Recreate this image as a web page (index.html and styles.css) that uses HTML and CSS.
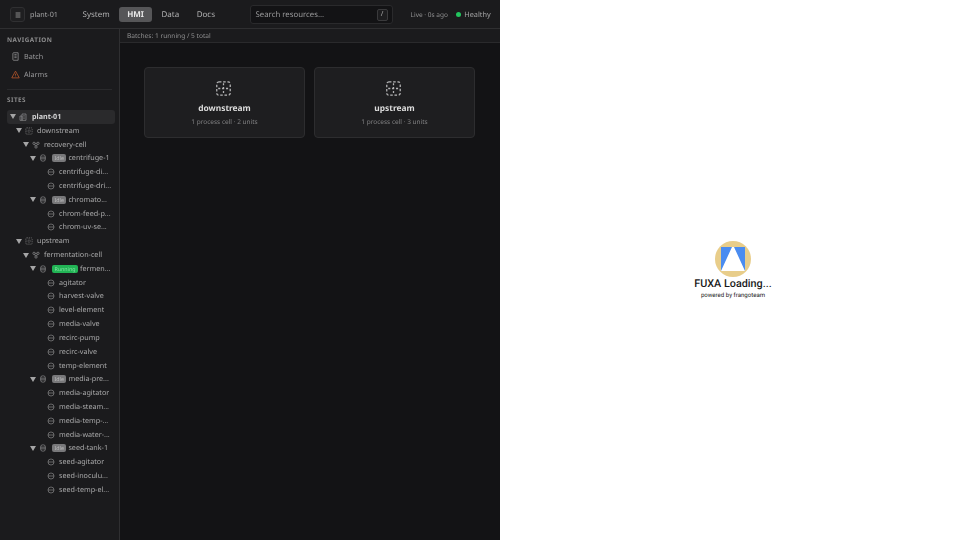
FILE: index.html
```html
<!DOCTYPE html>
<html lang="en">
<head>
<meta charset="utf-8">
<title>plant-01 HMI</title>
<link rel="stylesheet" href="styles.css">
</head>
<body>
<svg class="defs" width="0" height="0" aria-hidden="true">
  <defs>
    <symbol id="i-area" viewBox="0 0 24 24"><rect x="2.500" y="2.500" width="19" height="19" rx="3" fill="none" stroke="currentColor" stroke-width="1.800" stroke-dasharray="3.600 2.400"/><path d="M12 4.500v15M4.500 12h15" fill="none" stroke="currentColor" stroke-width="1.800" stroke-dasharray="3 2.500"/></symbol>
    <symbol id="i-unit" viewBox="0 0 24 24"><circle cx="12" cy="12" r="9" fill="none" stroke="currentColor" stroke-width="2"/><path d="M3 12h18" stroke="currentColor" stroke-width="2"/></symbol>
    <symbol id="i-tank" viewBox="0 0 24 24"><rect x="5" y="2.500" width="14" height="19" rx="6" fill="none" stroke="currentColor" stroke-width="2.200"/><path d="M5 9.500h14M5 14.500h14" stroke="currentColor" stroke-width="2.200"/></symbol>
    <symbol id="i-cell" viewBox="0 0 24 24"><circle cx="6" cy="7" r="3.500" fill="none" stroke="currentColor" stroke-width="2.200"/><circle cx="18" cy="7" r="3.500" fill="none" stroke="currentColor" stroke-width="2.200"/><circle cx="12" cy="18" r="3.500" fill="none" stroke="currentColor" stroke-width="2.200"/><path d="M9.500 7h5M8 10l2.500 5M16 10l-2.500 5" stroke="currentColor" stroke-width="2.200"/></symbol>
    <symbol id="i-site" viewBox="0 0 24 24"><path d="M3 22V9h6v13M9 22V3h12v19M3 22h18M13 8h4M13 12h4M13 16h4" fill="none" stroke="currentColor" stroke-width="2.200"/></symbol>
  </defs>
</svg>
<div class="app">
  <header class="topbar">
    <button class="menu-btn" type="button" aria-label="Menu">
      <svg class="menu-icon" viewBox="0 0 10 10"><path d="M2 2.500h6M2 5h6M2 7.500h6" stroke="currentColor" stroke-width="1"/></svg>
    </button>
    <span class="site-name">plant-01</span>
    <nav class="tabs">
      <a class="tab">System</a>
      <a class="tab tab-active">HMI</a>
      <a class="tab">Data</a>
      <a class="tab">Docs</a>
    </nav>
    <div class="search">
      <span class="search-text">Search resources...</span>
      <kbd class="search-key">/</kbd>
    </div>
    <span class="live">Live · 0s ago</span>
    <span class="dot"></span>
    <span class="health">Healthy</span>
  </header>
  <div class="body-row">
    <aside class="sidebar">
      <h2 class="side-title first">NAVIGATION</h2>
      <a class="nav-item">
        <svg class="nav-icon" viewBox="0 0 24 24"><path d="M5 4a2 2 0 0 1 2-2h12v20H7a2 2 0 0 1-2-2zM9 7h6M9 11h6M9 15h6" fill="none" stroke="currentColor" stroke-width="2"/></svg>
        Batch
      </a>
      <a class="nav-item">
        <svg class="nav-icon alarm" viewBox="0 0 24 24"><path d="M12 3 22 21H2zM12 10v5M12 17.500v1" fill="none" stroke="currentColor" stroke-width="2.200"/></svg>
        Alarms
      </a>
      <div class="side-rule"></div>
      <h2 class="side-title">SITES</h2>
      <div class="tree">
        <div class="row d0 row-current"><span class="caret"></span><svg class="ti"><use href="#i-site"/></svg><span class="label strong">plant-01</span></div>
        <div class="row d1"><span class="caret"></span><svg class="ti"><use href="#i-area"/></svg><span class="label">downstream</span></div>
        <div class="row d2"><span class="caret"></span><svg class="ti"><use href="#i-cell"/></svg><span class="label">recovery-cell</span></div>
        <div class="row d3"><span class="caret"></span><svg class="ti"><use href="#i-tank"/></svg><span class="badge">Idle</span><span class="label">centrifuge-1</span></div>
        <div class="row d4"><span class="no-caret"></span><svg class="ti"><use href="#i-unit"/></svg><span class="label">centrifuge-di...</span></div>
        <div class="row d4"><span class="no-caret"></span><svg class="ti"><use href="#i-unit"/></svg><span class="label">centrifuge-dri...</span></div>
        <div class="row d3"><span class="caret"></span><svg class="ti"><use href="#i-tank"/></svg><span class="badge">Idle</span><span class="label">chromato...</span></div>
        <div class="row d4"><span class="no-caret"></span><svg class="ti"><use href="#i-unit"/></svg><span class="label">chrom-feed-p...</span></div>
        <div class="row d4"><span class="no-caret"></span><svg class="ti"><use href="#i-unit"/></svg><span class="label">chrom-uv-se...</span></div>
        <div class="row d1"><span class="caret"></span><svg class="ti"><use href="#i-area"/></svg><span class="label">upstream</span></div>
        <div class="row d2"><span class="caret"></span><svg class="ti"><use href="#i-cell"/></svg><span class="label">fermentation-cell</span></div>
        <div class="row d3"><span class="caret"></span><svg class="ti"><use href="#i-tank"/></svg><span class="badge badge-run">Running</span><span class="label">fermen...</span></div>
        <div class="row d4"><span class="no-caret"></span><svg class="ti"><use href="#i-unit"/></svg><span class="label">agitator</span></div>
        <div class="row d4"><span class="no-caret"></span><svg class="ti"><use href="#i-unit"/></svg><span class="label">harvest-valve</span></div>
        <div class="row d4"><span class="no-caret"></span><svg class="ti"><use href="#i-unit"/></svg><span class="label">level-element</span></div>
        <div class="row d4"><span class="no-caret"></span><svg class="ti"><use href="#i-unit"/></svg><span class="label">media-valve</span></div>
        <div class="row d4"><span class="no-caret"></span><svg class="ti"><use href="#i-unit"/></svg><span class="label">recirc-pump</span></div>
        <div class="row d4"><span class="no-caret"></span><svg class="ti"><use href="#i-unit"/></svg><span class="label">recirc-valve</span></div>
        <div class="row d4"><span class="no-caret"></span><svg class="ti"><use href="#i-unit"/></svg><span class="label">temp-element</span></div>
        <div class="row d3"><span class="caret"></span><svg class="ti"><use href="#i-tank"/></svg><span class="badge">Idle</span><span class="label">media-pre...</span></div>
        <div class="row d4"><span class="no-caret"></span><svg class="ti"><use href="#i-unit"/></svg><span class="label">media-agitator</span></div>
        <div class="row d4"><span class="no-caret"></span><svg class="ti"><use href="#i-unit"/></svg><span class="label">media-steam...</span></div>
        <div class="row d4"><span class="no-caret"></span><svg class="ti"><use href="#i-unit"/></svg><span class="label">media-temp-...</span></div>
        <div class="row d4"><span class="no-caret"></span><svg class="ti"><use href="#i-unit"/></svg><span class="label">media-water-...</span></div>
        <div class="row d3"><span class="caret"></span><svg class="ti"><use href="#i-tank"/></svg><span class="badge">Idle</span><span class="label">seed-tank-1</span></div>
        <div class="row d4"><span class="no-caret"></span><svg class="ti"><use href="#i-unit"/></svg><span class="label">seed-agitator</span></div>
        <div class="row d4"><span class="no-caret"></span><svg class="ti"><use href="#i-unit"/></svg><span class="label">seed-inoculu...</span></div>
        <div class="row d4"><span class="no-caret"></span><svg class="ti"><use href="#i-unit"/></svg><span class="label">seed-temp-el...</span></div>
      </div>
    </aside>
    <main class="main">
      <div class="status">Batches: 1 running / 5 total</div>
      <div class="cards">
        <section class="card">
          <svg class="card-icon"><use href="#i-area"/></svg>
          <h3 class="card-title">downstream</h3>
          <p class="card-sub">1 process cell · 2 units</p>
        </section>
        <section class="card">
          <svg class="card-icon"><use href="#i-area"/></svg>
          <h3 class="card-title">upstream</h3>
          <p class="card-sub">1 process cell · 3 units</p>
        </section>
      </div>
    </main>
  </div>
</div>
<aside class="loader">
  <svg class="logo" viewBox="0 0 36 36">
    <circle cx="18" cy="18" r="18" fill="#e8cd8a"/>
    <rect x="6" y="6" width="24" height="24" fill="#fff"/>
    <path d="M6 6h11L6 30zM19 6h11v24z" fill="#4a8cf0"/>
  </svg>
  <div class="load-title">FUXA Loading...</div>
  <div class="load-sub">powered by frangoteam</div>
</aside>
</body>
</html>
```
FILE: styles.css
```css
* { box-sizing: border-box; }
html, body { margin: 0; height: 100%; }
body { display: flex; width: 960px; height: 540px; overflow: hidden; background: #fff; font-family: "Noto Sans", sans-serif; text-rendering: geometricPrecision; }
.defs { position: absolute; }
.app { width: 500px; height: 540px; flex: none; display: flex; flex-direction: column; background: #1b1b1d; color: #b9b9ba; filter: blur(0.3px); }

.topbar { height: 29px; flex: none; display: flex; align-items: center; padding: 1px 0 0 10px; border-bottom: 1px solid #2f2f31; white-space: nowrap; }
.menu-btn { width: 15px; height: 15px; flex: none; padding: 0; display: flex; align-items: center; justify-content: center; background: #1f1f21; border: 1px solid #303032; border-radius: 3px; color: #a8a8a8; }
.menu-icon { width: 8px; height: 8px; }
.site-name { margin-left: 5px; width: 27px; font-size: 7.200px; color: #a5a5a6; }
.tabs { display: flex; gap: 1.500px; margin-left: 17.500px; }
.tab { padding: 0 8px; height: 15px; line-height: 15px; font-size: 8px; color: #b0b0b1; border-radius: 3px; }
.tab-active { background: #565658; color: #e8e8e8; font-weight: 700; }
.search { width: 143px; height: 19px; margin-left: 26.500px; padding: 0 4px 0 5px; flex: none; display: flex; align-items: center; justify-content: space-between; background: #131315; border: 1px solid #2a2a2c; border-radius: 3px; }
.search-text { font-size: 7.800px; color: #99999a; }
.search-key { width: 11px; height: 12px; display: flex; align-items: center; justify-content: center; font: 7px "Noto Sans", sans-serif; color: #a5a5a5; background: #1d1d1f; border: 1px solid #3a3a3c; border-radius: 2px; }
.live { margin-left: 18px; font-size: 6.500px; color: #8f8f90; }
.dot { width: 5px; height: 5px; flex: none; margin-left: 8px; border-radius: 50%; background: #22c55e; }
.health { margin-left: 3.500px; font-size: 7.300px; color: #a5a5a6; }

.body-row { flex: 1; min-height: 0; display: flex; }
.sidebar { width: 120px; flex: none; padding: 5.500px 4px 0 7px; border-right: 1px solid #2f2f31; }
.side-title { margin: 0; font-size: 6.300px; line-height: 9px; font-weight: 700; letter-spacing: 0.500px; color: #8d8d8e; }
.first { margin-top: 0; margin-bottom: 4px; }
.nav-item { height: 18px; display: flex; align-items: center; gap: 4px; padding-left: 4px; font-size: 7.200px; color: #98989a; }
.nav-icon { width: 9px; height: 9px; color: #98989a; }
.alarm { color: #b4552a; }
.side-rule { height: 1px; margin: 5px 3px 5px 0; background: #2a2a2c; }
.side-title + .tree { margin-top: 6.500px; }
.tree { display: flex; flex-direction: column; }
.row { height: 13.820px; flex: none; display: flex; align-items: center; min-width: 0; font-size: 7.200px; color: #a9a9aa; }
.d0 { padding-left: 3px; }
.d1 { padding-left: 9px; }
.d2 { padding-left: 16px; }
.d3 { padding-left: 23px; }
.d4 { padding-left: 31px; }
.row-current { background: #2a2a2c; border-radius: 3px; }
.caret { width: 0; height: 0; flex: none; margin-right: 3px; border-left: 3px solid transparent; border-right: 3px solid transparent; border-top: 5px solid #a5a5a6; }
.no-caret { width: 6px; flex: none; margin-right: 3px; }
.ti { width: 8px; height: 8px; flex: none; margin-right: 4px; color: #8b8b8c; }
.label { min-width: 0; white-space: nowrap; overflow: hidden; }
.strong { font-weight: 700; color: #d2d2d3; margin-left: 1px; }
.badge { flex: none; height: 8px; padding: 0 2.500px; margin: 0 2px 0 1px; border-radius: 2px; background: #78787a; color: #bcbcbd; font-size: 5.300px; line-height: 8px; }
.badge-run { background: #22b455; color: #7fe3a0; }

.main { flex: 1; min-width: 0; background: #131315; display: flex; flex-direction: column; }
.status { height: 14px; flex: none; padding-left: 7px; background: #1b1b1d; border-bottom: 1px solid #2a2a2c; font-size: 6.600px; line-height: 13px; color: #8f8f90; }
.cards { display: grid; grid-template-columns: 161px 161px; gap: 9px; padding: 24px; }
.card { height: 71px; display: flex; flex-direction: column; align-items: center; background: #1e1e20; border: 1px solid #2d2d2f; border-radius: 4px; padding-top: 12px; }
.card-icon { width: 17px; height: 17px; margin-right: 2px; color: #b5b5b6; }
.card-title { margin: 4.500px 0 0; font-size: 8.400px; line-height: 14px; font-weight: 700; color: #dcdcdc; }
.card-sub { margin: 0; font-size: 6.500px; line-height: 11px; color: #808082; }

.loader { flex: 1; display: flex; flex-direction: column; align-items: center; justify-content: center; padding: 1.500px 0 0 6px; font-family: Roboto, sans-serif; }
.logo { width: 36px; height: 36px; }
.load-title { font-size: 10.800px; line-height: 14px; font-weight: 500; color: #1a1a1a; }
.load-sub { font-size: 6.100px; line-height: 9px; color: #222; }
```
